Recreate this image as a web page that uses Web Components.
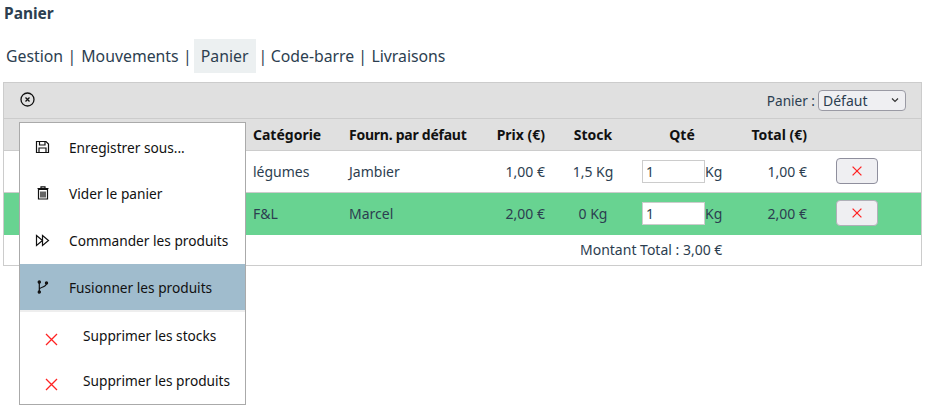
<!DOCTYPE html>
<html lang="fr">
<head>
<meta charset="utf-8">
<title>Panier</title>
<style>
    html, body { margin: 0; padding: 0; background: #fff; }
    body { font: 14px "Noto Sans", "Open Sans", sans-serif; color: #2c3e50; }
</style>
</head>
<body>
<cart-page>
    <nav-tabs slot="nav"></nav-tabs>
    <cart-panel slot="panel">
        <cart-row category="légumes" supplier="Jambier" price="1,00 €" stock="1,5 Kg" qty="1" total="1,00 €"></cart-row>
        <cart-row category="F&amp;L" supplier="Marcel" price="2,00 €" stock="0 Kg" qty="1" total="2,00 €" highlight></cart-row>
    </cart-panel>
    <context-menu slot="menu">
        <menu-entry icon="save">Enregistrer sous...</menu-entry>
        <menu-entry icon="trash">Vider le panier</menu-entry>
        <menu-entry icon="forward">Commander les produits</menu-entry>
        <menu-entry icon="merge" active>Fusionner les produits</menu-entry>
        <menu-entry icon="cross" danger separated>Supprimer les stocks</menu-entry>
        <menu-entry icon="cross" danger>Supprimer les produits</menu-entry>
    </context-menu>
</cart-page>

<script>
const COLUMNS = '244px 96px 128px 78px 86px 92px 84px 1fr';

const ICONS = {
    save: '<path d="M1.500 1.500h9.500l2.500 2.500v8.500h-12z"/><path d="M4.500 1.500v3.500h5.500v-3.500M4 12.500v-4.500h7v4.500"/>',
    trash: '<path d="M3.500 3.500h9v9.500h-9z"/><path d="M2.500 2.500h11M6 2.500V.8h4v1.700"/><path d="M6 5.500v6M8 5.500v6M10 5.500v6" stroke-width="1.300"/>',
    forward: '<path d="M1.500 2.500l6 5-6 5zM7.500 2.500l6 5-6 5z"/>',
    merge: '<circle cx="4.300" cy="2" r="1.100" fill="#111"/><circle cx="4.300" cy="12" r="1.100" fill="#111"/><circle cx="11.500" cy="3" r="1.100" fill="#111"/><path d="M4.300 2.500v9M4.300 9.500c0-3 6.700-1.500 7.200-6"/>',
    cross: '<path d="M2 2l11 11M13 2L2 13"/>',
};

class CartPage extends HTMLElement {
    constructor() {
        super();
        this.attachShadow({ mode: 'open' });
        this.shadowRoot.innerHTML = `
            <style>
                :host { display: block; position: relative; height: 411px; overflow: hidden; }
                h1 { margin: 0; padding: 4px 4px 0; height: 35px; box-sizing: border-box; font-size: 15.500px; line-height: 19px; font-weight: 700; }
                .nav { padding-left: 6px; height: 43px; }
                .panel { padding-left: 3px; padding-right: 12px; }
                ::slotted([slot="menu"]) { position: absolute; left: 19px; top: 122px; }
            </style>
            <h1>Panier</h1>
            <div class="nav"><slot name="nav"></slot></div>
            <div class="panel"><slot name="panel"></slot></div>
            <slot name="menu"></slot>
        `;
    }
}

class NavTabs extends HTMLElement {
    constructor() {
        super();
        this.attachShadow({ mode: 'open' });
        this.shadowRoot.innerHTML = `
            <style>
                :host { display: flex; align-items: center; height: 34px; margin-top: 4px; font-size: 15.800px; color: #2c3e50; }
                span { white-space: pre; }
                .sep { margin: 0 5px 0 4.500px; }
                .sep.tight { margin: 0 3.500px 0 3px; }
                .sep.end { margin: 0 4.500px 0 4px; }
                .current { background: #ecf0f1; padding: 0 7px; height: 34px; line-height: 34px; margin-left: -3px; }
            </style>
            <span>Gestion</span><span class="sep">|</span>
            <span>Mouvements</span><span class="sep">|</span>
            <span class="current">Panier</span><span class="sep tight">|</span>
            <span>Code-barre</span><span class="sep end">|</span>
            <span>Livraisons</span>
        `;
    }
}

class CartPanel extends HTMLElement {
    constructor() {
        super();
        this.attachShadow({ mode: 'open' });
        this.shadowRoot.innerHTML = `
            <style>
                :host { display: block; border: 1px solid #ccc; background: #fff; font-size: 14px; }
                .toolbar { display: flex; align-items: center; justify-content: space-between; height: 35px; padding: 0 15px 0 16px; background: #e0e0e0; border-bottom: 1px solid #ccc; }
                .toolbar svg { width: 15px; height: 15px; fill: none; stroke: #111; stroke-width: 1.300; margin-bottom: 2px; }
                .choice { display: flex; align-items: center; gap: 3px; margin-bottom: 1px; }
                .choice span { font-size: 13.600px; }
                select { appearance: none; box-sizing: border-box; width: 88px; height: 21px; font: inherit; color: #2c3e50; border: 1px solid #9a9aa4; border-radius: 4px; padding: 0 0 0 4px;
                    background: #efeff2 url("data:image/svg+xml,%3Csvg xmlns='http://www.w3.org/2000/svg' width='8' height='6'%3E%3Cpath d='M1 1.500l3 3 3-3' fill='none' stroke='%23333' stroke-width='1.200'/%3E%3C/svg%3E") no-repeat right 6px center; }
                .head { display: grid; grid-template-columns: ${COLUMNS}; align-items: center; height: 31px; background: #e0e0e0; border-bottom: 1px solid #ccc; font-weight: 700; color: #111; }
                .head span:nth-child(2), .head span:nth-child(3) { padding-left: 5px; }
                .head span:nth-child(3) { letter-spacing: -0.250px; }
                .r { text-align: right; padding-right: 5px; }
                .c { text-align: center; }
                .foot { height: 30px; line-height: 30px; text-align: left; padding-left: 576px; }
            </style>
            <div class="toolbar">
                <svg viewBox="0 0 15 15"><circle cx="7.500" cy="7.500" r="6.500"/><path d="M5.500 5.500l4 4M9.500 5.500l-4 4"/></svg>
                <div class="choice"><span>Panier :</span>
                    <select><option>Défaut</option></select></div>
            </div>
            <div class="head">
                <span></span><span>Catégorie</span><span>Fourn. par défaut</span>
                <span class="r">Prix (€)</span><span class="c">Stock</span><span class="c">Qté</span>
                <span class="r">Total (€)</span><span></span>
            </div>
            <slot></slot>
            <div class="foot">Montant Total : 3,00 €</div>
        `;
    }
}

class CartRow extends HTMLElement {
    constructor() {
        super();
        this.attachShadow({ mode: 'open' });
    }

    connectedCallback() {
        const a = (name) => this.getAttribute(name);
        this.shadowRoot.innerHTML = `
            <style>
                :host { display: grid; grid-template-columns: ${COLUMNS}; align-items: center; height: 41px; border-bottom: 1px solid #ccc; }
                :host([highlight]) { background: #68d391; border-bottom-color: #68d391; }
                .p { padding-left: 5px; }
                .r { text-align: right; padding-right: 5px; }
                .c { text-align: center; }
                .qty { display: flex; align-items: center; padding-left: 6px; }
                input { box-sizing: border-box; width: 63px; height: 23px; font: inherit; color: #2c3e50; background: #fff; border: 1px solid #ccc; padding: 0 3px; outline: 0; }
                .action { display: flex; align-items: center; }
                button { margin: -1px 0 0 24px; width: 42px; height: 26px; padding: 0; display: flex; align-items: center; justify-content: center; background: #efeff2; border: 1px solid #8f8f9d; border-radius: 4px; }
                svg { width: 12px; height: 12px; fill: none; stroke: #f22; stroke-width: 1.600; }
                :host([highlight]) button { border-color: #b0b0b8; }
            </style>
            <span></span>
            <span class="p">${a('category').replace('&', '&amp;')}</span>
            <span class="p">${a('supplier')}</span>
            <span class="r">${a('price')}</span>
            <span class="c">${a('stock')}</span>
            <span class="qty"><input value="${a('qty')}"><span>Kg</span></span>
            <span class="r">${a('total')}</span>
            <span class="action"><button><svg viewBox="0 0 15 15">${ICONS.cross}</svg></button></span>
        `;
    }
}

class ContextMenu extends HTMLElement {
    constructor() {
        super();
        this.attachShadow({ mode: 'open' });
        this.shadowRoot.innerHTML = `
            <style>
                :host { display: block; box-sizing: border-box; width: 227px; height: 283px; background: #fff; border: 1px solid #aaa; color: #111; font-size: 13.700px; }
            </style>
            <slot></slot>
        `;
    }
}

class MenuEntry extends HTMLElement {
    constructor() {
        super();
        this.attachShadow({ mode: 'open' });
    }

    connectedCallback() {
        this.shadowRoot.innerHTML = `
            <style>
                :host { display: flex; box-sizing: border-box; align-items: center; height: 47px; padding-left: 15px; white-space: nowrap; }
                :host(:first-child) { padding-top: 2px; }
                :host([active]) { background: #a0bccd; height: 46px; }
                :host([danger]) { padding-left: 24px; padding-top: 2px; height: 45px; }
                :host([separated]) { border-top: 2px solid #eee; height: 47px; }
                svg { flex: none; width: 15px; height: 15px; fill: none; stroke: #111; stroke-width: 1.200; margin-right: 19px; }
                :host([danger]) svg { stroke: #f22; stroke-width: 1.300; margin-right: 24px; margin-top: 8px; }
            </style>
            <svg viewBox="0 0 15 15">${ICONS[this.getAttribute('icon')]}</svg>
            <slot></slot>
        `;
    }
}

customElements.define('cart-page', CartPage);
customElements.define('nav-tabs', NavTabs);
customElements.define('cart-panel', CartPanel);
customElements.define('cart-row', CartRow);
customElements.define('context-menu', ContextMenu);
customElements.define('menu-entry', MenuEntry);
</script>
</body>
</html>
